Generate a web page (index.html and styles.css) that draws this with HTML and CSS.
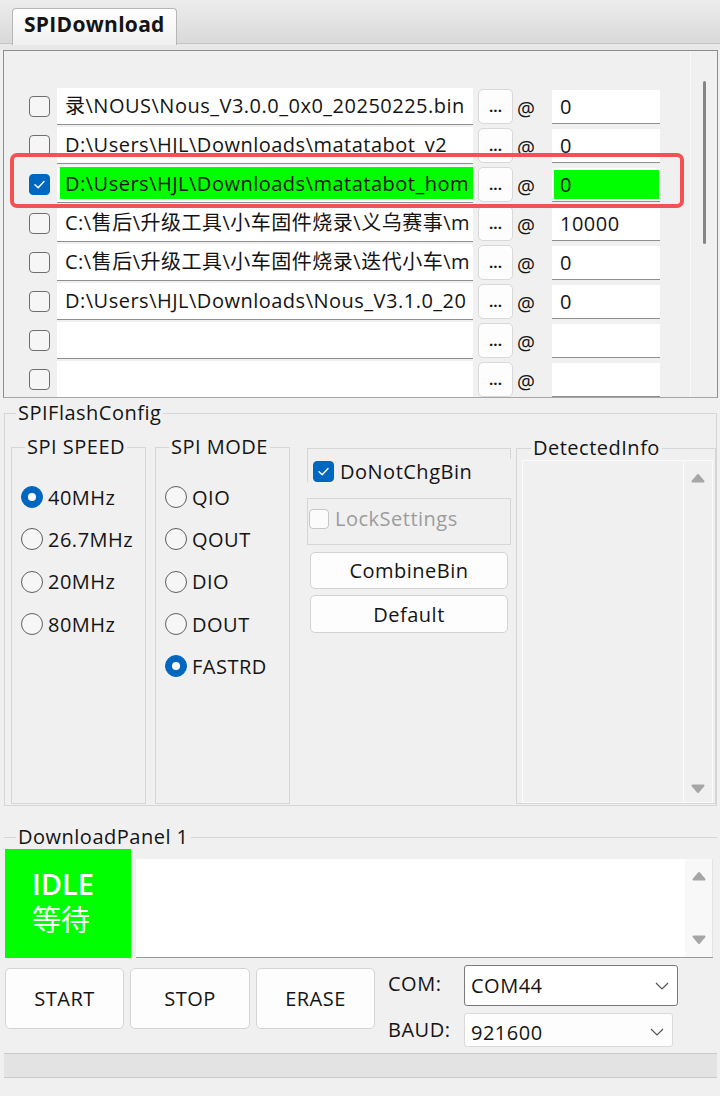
FILE: index.html
```html
<!DOCTYPE html>
<html lang="zh-CN">
  <head>
    <meta charset="UTF-8" />
    <meta name="viewport" content="width=device-width, initial-scale=1.0" />
    <title>SPIDownload</title>
    <link rel="stylesheet" href="styles.css">
  </head>
  <body>
    <div class="window">
      <div class="tabstrip">
        <div class="tab">SPIDownload</div>
      </div>

      <div class="files">
        <div class="file-list">
          <div class="file-row">
            <span class="check"></span>
            <div class="path">录\NOUS\Nous_V3.0.0_0x0_20250225.bin</div>
            <button class="browse">...</button>
            <span class="at">@</span>
            <div class="offset">0</div>
          </div>
          <div class="file-row">
            <span class="check"></span>
            <div class="path">D:\Users\HJL\Downloads\matatabot_v2</div>
            <button class="browse">...</button>
            <span class="at">@</span>
            <div class="offset">0</div>
          </div>
          <div class="file-row">
            <span class="check on">
              <svg width="21" height="21" viewBox="0 0 21 21"><path d="M6 10.8 L9.2 13.8 L15 7.6" fill="none" stroke="#fff" stroke-width="1.4" stroke-linecap="round" stroke-linejoin="round"/></svg>
            </span>
            <div class="path hit">D:\Users\HJL\Downloads\matatabot_hom</div>
            <button class="browse">...</button>
            <span class="at">@</span>
            <div class="offset hit">0</div>
          </div>
          <div class="file-row">
            <span class="check"></span>
            <div class="path">C:\售后\升级工具\小车固件烧录\义乌赛事\m</div>
            <button class="browse">...</button>
            <span class="at">@</span>
            <div class="offset">10000</div>
          </div>
          <div class="file-row">
            <span class="check"></span>
            <div class="path">C:\售后\升级工具\小车固件烧录\迭代小车\m</div>
            <button class="browse">...</button>
            <span class="at">@</span>
            <div class="offset">0</div>
          </div>
          <div class="file-row">
            <span class="check"></span>
            <div class="path">D:\Users\HJL\Downloads\Nous_V3.1.0_20</div>
            <button class="browse">...</button>
            <span class="at">@</span>
            <div class="offset">0</div>
          </div>
          <div class="file-row">
            <span class="check"></span>
            <div class="path"></div>
            <button class="browse">...</button>
            <span class="at">@</span>
            <div class="offset"></div>
          </div>
          <div class="file-row">
            <span class="check"></span>
            <div class="path"></div>
            <button class="browse">...</button>
            <span class="at">@</span>
            <div class="offset"></div>
          </div>
          <!-- red annotation box round the third row -->
          <div class="marker"></div>
        </div>
        <div class="vscroll"><div class="thumb"></div></div>
      </div>

      <div class="lower">
        <fieldset class="group flash">
          <legend>SPIFlashConfig</legend>
          <div class="flash-body">
            <fieldset class="group sub speed">
              <legend>SPI SPEED</legend>
              <div class="radio"><span class="dot on"></span>40MHz</div>
              <div class="radio"><span class="dot"></span>26.7MHz</div>
              <div class="radio"><span class="dot"></span>20MHz</div>
              <div class="radio"><span class="dot"></span>80MHz</div>
            </fieldset>
            <fieldset class="group sub mode">
              <legend>SPI MODE</legend>
              <div class="radio"><span class="dot"></span>QIO</div>
              <div class="radio"><span class="dot"></span>QOUT</div>
              <div class="radio"><span class="dot"></span>DIO</div>
              <div class="radio"><span class="dot"></span>DOUT</div>
              <div class="radio"><span class="dot on"></span>FASTRD</div>
            </fieldset>
            <div class="opts">
              <div class="opt-frame first">
                <span class="check on">
                  <svg width="21" height="21" viewBox="0 0 21 21"><path d="M6 10.8 L9.2 13.8 L15 7.6" fill="none" stroke="#fff" stroke-width="1.4" stroke-linecap="round" stroke-linejoin="round"/></svg>
                </span>
                <span>DoNotChgBin</span>
              </div>
              <div class="opt-frame second">
                <span class="check off"></span>
                <span class="disabled">LockSettings</span>
              </div>
              <button class="wide-btn combine">CombineBin</button>
              <button class="wide-btn default">Default</button>
            </div>
            <fieldset class="group detected">
              <legend>DetectedInfo</legend>
              <div class="info-box">
                <div class="info-text"></div>
                <div class="sb">
                  <svg width="14" height="10" viewBox="0 0 14 10"><polygon points="1.5,8.5 7,2 12.5,8.5" fill="#a6a6a6" stroke="#a6a6a6" stroke-width="2" stroke-linejoin="round"/></svg>
                  <svg width="14" height="10" viewBox="0 0 14 10"><polygon points="1.5,1.5 7,8 12.5,1.5" fill="#a6a6a6" stroke="#a6a6a6" stroke-width="2" stroke-linejoin="round"/></svg>
                </div>
              </div>
            </fieldset>
          </div>
        </fieldset>

        <fieldset class="download">
          <legend>DownloadPanel 1</legend>
          <div class="dl-top">
            <div class="state"><b>IDLE</b><br>等待</div>
            <div class="log">
              <div class="sb">
                <svg width="14" height="10" viewBox="0 0 14 10"><polygon points="1.5,8.5 7,2 12.5,8.5" fill="#a6a6a6" stroke="#a6a6a6" stroke-width="2" stroke-linejoin="round"/></svg>
                <svg width="14" height="10" viewBox="0 0 14 10"><polygon points="1.5,1.5 7,8 12.5,1.5" fill="#a6a6a6" stroke="#a6a6a6" stroke-width="2" stroke-linejoin="round"/></svg>
              </div>
            </div>
          </div>
          <div class="dl-bottom">
            <button class="btn">START</button>
            <button class="btn">STOP</button>
            <button class="btn">ERASE</button>
            <div class="port">
              <span class="port-label">COM:</span>
              <div class="combo com">
                <span>COM44</span>
                <svg width="14" height="8" viewBox="0 0 14 8"><path d="M1 1 L7 7 L13 1" fill="none" stroke="#555" stroke-width="1.2"/></svg>
              </div>
              <span class="port-label baud-label">BAUD:</span>
              <div class="combo baud">
                <span>921600</span>
                <svg width="14" height="8" viewBox="0 0 14 8"><path d="M1 1 L7 7 L13 1" fill="none" stroke="#555" stroke-width="1.2"/></svg>
              </div>
            </div>
          </div>
        </fieldset>

        <div class="statusbar"></div>
      </div>
    </div>
  </body>
</html>
```

FILE: styles.css
```css
* {
  box-sizing: border-box;
}
body {
  margin: 0;
  background: #f0f0f0;
  font-family: "Open Sans", "Noto Sans CJK SC", sans-serif;
  font-size: 20px;
  letter-spacing: 0.5px;
  color: #141414;
}
button {
  font-family: inherit;
  letter-spacing: inherit;
  color: inherit;
  padding: 0;
  cursor: pointer;
}
.window {
  width: 720px;
  height: 1096px;
  overflow: hidden;
}

/* tab strip */
.tabstrip {
  height: 50px;
  padding: 8px 0 0 12px;
  background: linear-gradient(#ededed, #d9d9d9 43px, #c4c4c4 43px, #c4c4c4 44px, #e8e8e8 44px);
}
.tab {
  width: 165px;
  height: 37px;
  border: 1px solid #b6b6b6;
  border-bottom: none;
  border-radius: 4px 4px 0 0;
  background: linear-gradient(#ffffff, #f0f0f0);
  font-size: 21px;
  font-weight: 700;
  letter-spacing: 0.3px;
  line-height: 30px;
  padding-left: 11px;
}

/* file list */
.files {
  display: flex;
  width: 715px;
  height: 348px;
  margin-left: 3px;
  border: 1px solid #8d8d8d;
  border-bottom-color: #a6a6a6;
  overflow: hidden;
}
.file-list {
  position: relative;
  flex: 1;
  display: flex;
  flex-direction: column;
  gap: 2px;
  padding: 37px 0 0 25px;
}
.file-row {
  display: grid;
  grid-template-columns: 28px 416px 40px 39px 108px;
  align-items: center;
  height: 37px;
  flex-shrink: 0;
}
.check {
  display: block;
  width: 21px;
  height: 21px;
  border: 1px solid #6e6e6e;
  border-radius: 4px;
  background: #f6f6f6;
}
.check.on {
  background: #0067c0;
  border-color: #0067c0;
}
.check.on svg {
  display: block;
  margin: -1px;
}
.check.off {
  width: 20px;
  height: 20px;
  border-color: #c6c6c6;
  background: #fbfbfb;
}
.path {
  height: 37px;
  background: #fff;
  border-bottom: 1px solid #8f8f8f;
  padding: 0 8px;
  line-height: 35px;
  white-space: nowrap;
  overflow: hidden;
}
.path.hit {
  background: linear-gradient(#00ff00, #00ff00) 3px 1px / calc(100% - 3px) calc(100% - 4px) no-repeat, #fff;
}
.browse {
  width: 35px;
  height: 35px;
  margin-left: 5px;
  border: 1px solid #d8d8d8;
  border-radius: 5px;
  background: #fdfdfd;
  font-size: 15px;
  font-weight: 700;
  letter-spacing: 0;
  line-height: 33px;
}
.at {
  padding: 4px 0 0 4px;
}
.offset {
  height: 34px;
  background: #fff;
  border-bottom: 1px solid #8f8f8f;
  padding-left: 8px;
  line-height: 33px;
}
.offset.hit {
  background: linear-gradient(#00ff00, #00ff00) 2px 2px / calc(100% - 3px) calc(100% - 4px) no-repeat, #fff;
}
.marker {
  position: absolute;
  left: 6px;
  top: 102px;
  width: 674px;
  height: 55px;
  border: 4px solid #f45252;
  border-radius: 7px;
}
.vscroll {
  width: 27px;
  padding: 30px 0 0 12px;
  border-left: 1px solid #f8f8f8;
}
.thumb {
  width: 3px;
  height: 163px;
  border-radius: 2px;
  background: #858585;
}

/* lower panel */
.lower {
  padding: 0 3px 0 4px;
}
fieldset {
  margin: 0;
  min-width: 0;
}
legend {
  padding: 0 2px;
  line-height: 24px;
}
.group {
  border: 1px solid #d6d6d6;
}
.flash {
  margin-top: 3px;
  padding: 10px 0 1px 6px;
}
.flash > legend {
  margin-left: 5px;
}
.flash-body {
  display: flex;
  height: 369px;
}
.sub {
  width: 135px;
  padding: 17px 0 0 9px;
}
.sub > legend {
  margin-left: 4px;
}
.mode {
  margin-left: 9px;
}
.radio {
  display: flex;
  align-items: center;
  gap: 5px;
  height: 42.3px;
}
.dot {
  display: flex;
  align-items: center;
  justify-content: center;
  width: 22px;
  height: 22px;
  border: 1px solid #5e5e5e;
  border-radius: 50%;
  background: #f6f6f6;
}
.dot.on {
  background: #0067c0;
  border-color: #0067c0;
}
.dot.on::after {
  content: "";
  width: 8px;
  height: 8px;
  border-radius: 50%;
  background: #fff;
}
.opts {
  width: 204px;
  margin-left: 17px;
  padding-top: 13px;
}
.opt-frame {
  display: flex;
  align-items: center;
  gap: 6px;
  border-top: 1px solid #d6d6d6;
  border-left: 1px solid #d6d6d6;
}
.opt-frame.first {
  height: 34px;
  padding: 11px 0 0 5px;
  background: linear-gradient(#d6d6d6, #d6d6d6) right top / 1px 10px no-repeat;
}
.opt-frame.second {
  height: 47px;
  margin-top: 16px;
  border: 1px solid #d6d6d6;
  padding: 0 0 6px 1px;
}
.disabled {
  color: #9c9c9c;
}
.wide-btn {
  display: block;
  width: 198px;
  margin-left: 3px;
  border: 1px solid #d2d2d2;
  border-radius: 5px;
  background: #fdfdfd;
  font-size: 20px;
}
.combine {
  height: 37px;
  margin-top: 7px;
}
.default {
  height: 38px;
  margin-top: 6px;
}
.detected {
  flex: 1;
  display: flex;
  flex-direction: column;
  margin: 1px 0 0 5px;
  height: 368px;
  padding: 0 2px 0 5px;
}
.detected > legend {
  margin-left: 9px;
}
.info-box {
  flex: 1;
  display: flex;
  border: 1px solid #fbfbfb;
}
.info-text {
  flex: 1;
}
.sb {
  width: 29px;
  display: flex;
  flex-direction: column;
  justify-content: space-between;
  align-items: center;
  padding: 12px 0 8px;
  border-left: 1px solid #fbfbfb;
}

/* download panel */
.download {
  margin-top: 19px;
  border: none;
  border-top: 1px solid #d6d6d6;
  padding: 0 4px 0 1px;
}
.download > legend {
  margin-left: 11px;
}
.dl-top {
  display: flex;
  align-items: flex-end;
  height: 109px;
}
.state {
  width: 126px;
  height: 109px;
  padding: 17px 0 0 27px;
  background: #00ff00;
  color: #fff;
  font-size: 29px;
  letter-spacing: 0;
  line-height: 36px;
}
.state b {
  font-weight: 600;
}
.log {
  flex: 1;
  display: flex;
  justify-content: flex-end;
  height: 99px;
  margin-left: 5px;
  background: #fff;
  border-bottom: 1px solid #9a9a9a;
}
.log .sb {
  width: 28px;
  padding: 12px 0 12px;
  background: #f8f8f8;
  border-left: none;
  border-right: 1px solid #e2e2e2;
}
.dl-bottom {
  display: flex;
  align-items: flex-start;
  margin-top: 7px;
}
.btn {
  width: 119px;
  height: 61px;
  margin-top: 3px;
  border: 1px solid #d4d4d4;
  border-radius: 5px;
  background: #fdfdfd;
  font-size: 20px;
}
.btn + .btn {
  margin-left: 6px;
}
.btn:nth-child(2) {
  width: 120px;
}
.port {
  display: grid;
  grid-template-columns: 76px auto;
  align-items: center;
  margin-left: 13px;
}
.port-label {
  margin-top: -4px;
}
.baud-label {
  margin-top: 6px;
}
.combo {
  display: flex;
  align-items: center;
  justify-content: space-between;
  padding: 0 8px 0 6px;
  border-radius: 3px;
  background: #fff;
}
.com {
  width: 214px;
  height: 41px;
  border: 1px solid #7a7a7a;
}
.baud {
  width: 209px;
  height: 34px;
  margin-top: 7px;
  border: 1px solid #dadada;
  background: #fdfdfd;
  padding-top: 4px;
}
.statusbar {
  height: 25px;
  margin-top: 6px;
  background: #e3e3e3;
  border-top: 1px solid #cacaca;
  border-bottom: 1px solid #cacaca;
}
```
